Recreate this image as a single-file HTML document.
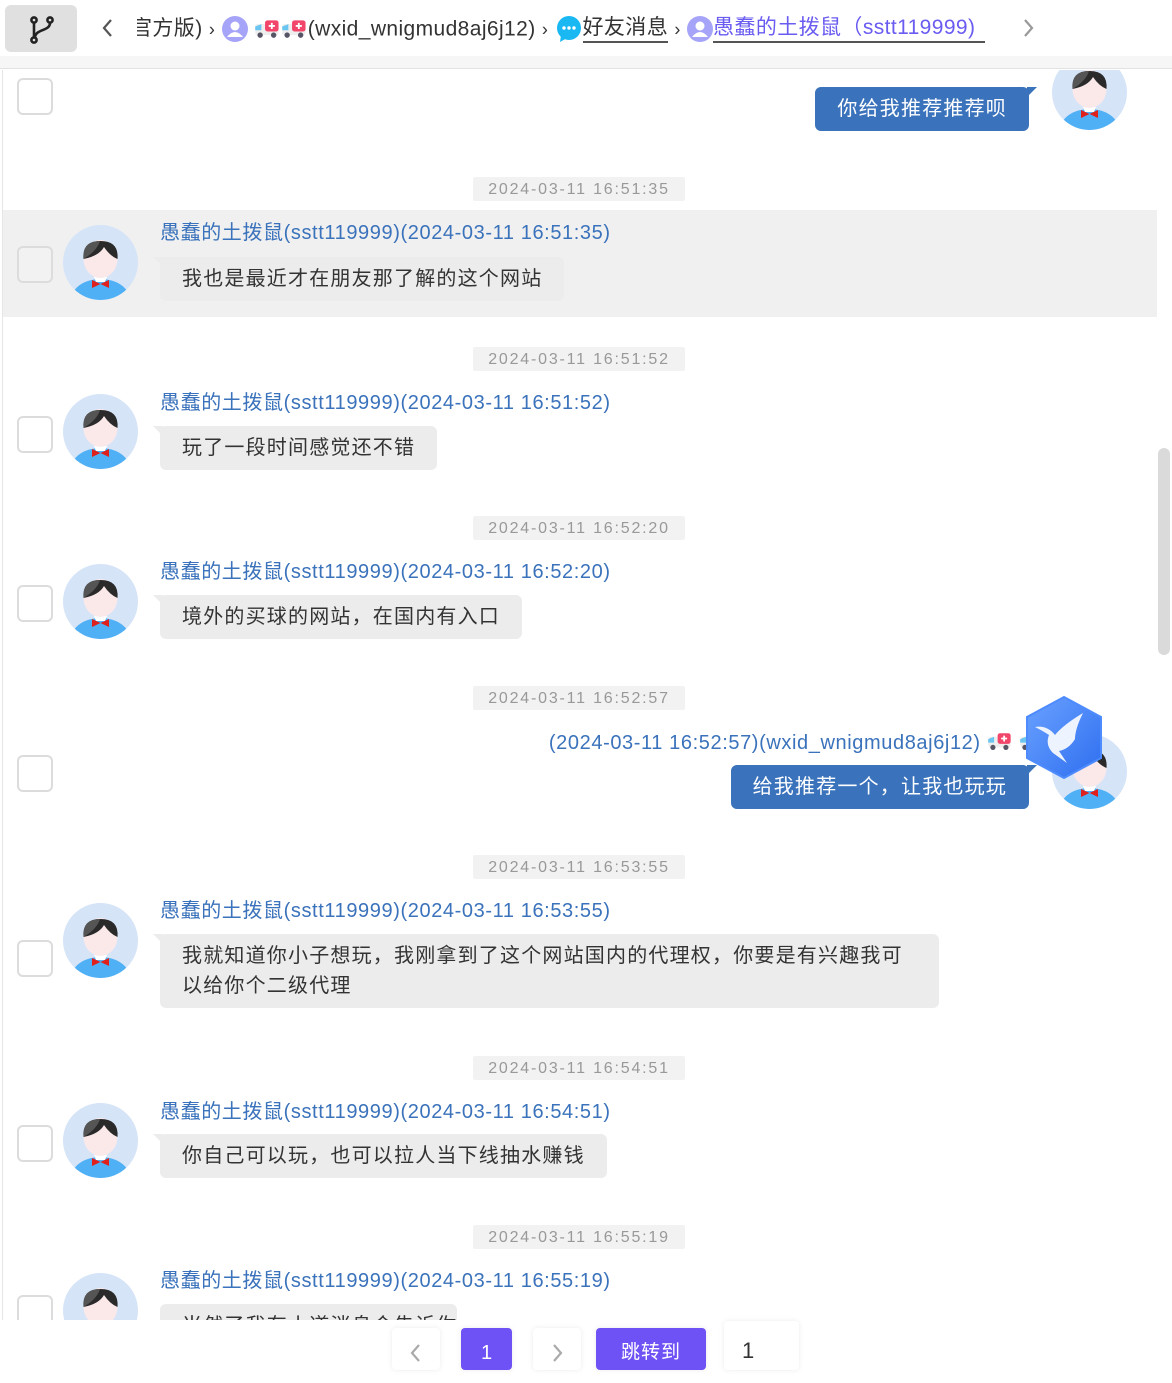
<!DOCTYPE html>
<html><head><meta charset="utf-8">
<style>
*{margin:0;padding:0;box-sizing:border-box}
body{width:1172px;height:1370px;overflow:hidden;background:#fff;font-family:"Liberation Sans","Noto Sans CJK SC",sans-serif;position:relative}
.abs{position:absolute}
.hdr{left:0;top:0;width:1172px;height:56px;background:#fff}
.strip{left:0;top:56px;width:1172px;height:13px;background:#f6f6f6;border-bottom:1px solid #e2e2e2}
.btn{left:5px;top:5px;width:72px;height:47px;background:#e0e0e0;border-radius:6px}
.crumb{left:137px;top:13px;width:870px;height:36px;overflow:hidden;white-space:nowrap;font-size:21px;color:#333;line-height:32px;letter-spacing:0.4px}
.crumb span,.crumb svg{vertical-align:middle}
.chat{left:2px;top:70px;width:1170px;height:1250px;overflow:hidden;border-left:1px solid #e6e6e6}
.ts{left:472px;width:212px;height:24px;background:#f2f2f2;color:#999;font-size:16px;line-height:25px;text-align:center;letter-spacing:1.8px;border-radius:2px;margin-top:0px}
.cb{left:16px;width:36px;height:37px;border:2px solid #dcdcdc;border-radius:6px;background:#fff}
.name{left:159px;font-size:20px;color:#3a72bb;line-height:26px;white-space:nowrap;letter-spacing:0.6px}
.bub{left:159px;background:#ececec;color:#333;font-size:20px;line-height:30px;padding:7px 22px;border-radius:6px;white-space:nowrap;letter-spacing:1.2px}
.bub:before{content:"";position:absolute;left:-7px;top:0;border-top:10px solid #ececec;border-left:10px solid transparent}
.rb{background:#3a72bb;color:#fff;font-size:20px;line-height:30px;padding:7px 22px;border-radius:6px;white-space:nowrap;letter-spacing:1.2px}
.rb:after{content:"";position:absolute;right:-8px;top:0;border-top:10px solid #3a72bb;border-right:10px solid transparent}
.av{width:75px;height:75px}
.pg{top:1328px;height:42px;background:#fff;border-radius:4px;box-shadow:0 0 6px rgba(0,0,0,.08);text-align:center;line-height:50px;font-size:20px}
</style></head><body>
<svg width="0" height="0" style="position:absolute">
<defs>
<clipPath id="cc"><circle cx="37.5" cy="37.5" r="37.5"/></clipPath>
<symbol id="avt" viewBox="0 0 75 75">
<circle cx="37.5" cy="37.5" r="37.5" fill="#d6e4f8"/>
<g clip-path="url(#cc)">
<ellipse cx="37.5" cy="74" rx="29" ry="20" fill="#4fb0f6"/>
<path d="M31 52 L44 52 L42 57 L33 57Z" fill="#fff"/>
<ellipse cx="37.5" cy="34" rx="17" ry="19" fill="#fbe9ea"/>
<path d="M20.5 34 Q19 16 37.5 16 Q56 16 54.5 34 Q47 31 41 22 Q36 31 20.5 34Z" fill="#2a2a2a"/>
<path d="M20.5 34 Q19 16 37 16 Q34 26 20.5 34Z" fill="#555"/>
<path d="M29 55 L37.5 59 L46 55 L46 63 L37.5 59 L29 63Z" fill="#e0201b"/>
</g></symbol>
<symbol id="amb" viewBox="0 0 22 16">
<rect x="1" y="4" width="19" height="9" rx="2" fill="#eeeeee"/>
<rect x="9" y="1" width="11" height="9" rx="2" fill="#f2456a"/>
<path d="M14.5 3v5M12 5.5h5" stroke="#fff" stroke-width="1.5"/>
<path d="M1 6 L6 4 L6 9 L1 9Z" fill="#6ac5f0"/>
<circle cx="5" cy="13" r="2.2" fill="#556"/><circle cx="16" cy="13" r="2.2" fill="#556"/>
</symbol>
</defs></svg>

<div class="abs hdr"></div>
<div class="abs strip"></div>
<div class="abs btn"><svg width="72" height="47" viewBox="0 0 72 47"><g fill="none" stroke="#222" stroke-width="2.6"><circle cx="29" cy="15" r="2.6"/><circle cx="29" cy="35" r="2.6"/><circle cx="45" cy="15" r="2.6"/><path d="M29 18v14M45 18c0 8-14 6-15 14"/></g></svg></div>
<svg class="abs" style="left:100px;top:17px" width="16" height="22" viewBox="0 0 16 22"><path d="M11 3 L4 11 L11 19" fill="none" stroke="#555" stroke-width="2.2"/></svg>
<div class="abs crumb"><span style="margin-left:-6px">官方版)</span> <span style="font-size:18px">›</span>
<svg width="26" height="26" viewBox="0 0 26 26"><circle cx="13" cy="13" r="13" fill="#a6a4f9"/><circle cx="13" cy="10" r="4.5" fill="#fff"/><path d="M5 21 Q13 11 21 21Z" fill="#fff"/></svg>
<svg width="27" height="20" viewBox="0 0 22 16"><use href="#amb"/></svg><svg width="27" height="20" viewBox="0 0 22 16"><use href="#amb"/></svg><span>(wxid_wnigmud8aj6j12)</span> <span style="font-size:18px">›</span>
<svg width="28" height="28" viewBox="0 0 28 28"><circle cx="14" cy="13" r="12" fill="#1ab8f3"/><path d="M6 20 L5 27 L12 23Z" fill="#1ab8f3"/><circle cx="9" cy="13" r="1.7" fill="#fff"/><circle cx="14" cy="13" r="1.7" fill="#fff"/><circle cx="19" cy="13" r="1.7" fill="#fff"/></svg><span style="border-bottom:2px solid #555;line-height:26px;display:inline-block">好友消息</span> <span style="font-size:18px">›</span>
<svg width="26" height="26" viewBox="0 0 26 26"><circle cx="13" cy="13" r="13" fill="#a6a4f9"/><circle cx="13" cy="10" r="4.5" fill="#fff"/><path d="M5 21 Q13 11 21 21Z" fill="#fff"/></svg><span style="color:#6a5cf0;border-bottom:2px solid #555;line-height:26px;display:inline-block;padding-right:10px">愚蠢的土拨鼠（sstt119999)</span>
</div>
<svg class="abs" style="left:1020px;top:17px" width="16" height="22" viewBox="0 0 16 22"><path d="M5 3 L12 11 L5 19" fill="none" stroke="#999" stroke-width="2.2"/></svg>

<div class="abs chat">
<div style="position:absolute;left:-2px;top:0;width:1170px;height:1250px">
<div class="abs cb" style="top:8px"></div>
<div class="abs rb" style="right:142px;top:17px">你给我推荐推荐呗</div>
<svg class="abs av" style="left:1051px;top:-15px"><use href="#avt"/></svg>

<div class="abs ts" style="top:107px">2024-03-11 16:51:35</div>
<div class="abs" style="left:2px;top:140px;width:1154px;height:107px;background:#f0f0f0"></div>
<div class="abs cb" style="top:176px;background:#f2f2f2"></div>
<svg class="abs av" style="left:62px;top:155px"><use href="#avt"/></svg>
<div class="abs name" style="top:150px">愚蠢的土拨鼠(sstt119999)(2024-03-11 16:51:35)</div>
<div class="abs bub" style="top:187px">我也是最近才在朋友那了解的这个网站</div>

<div class="abs ts" style="top:277px">2024-03-11 16:51:52</div>
<div class="abs cb" style="top:346px"></div>
<svg class="abs av" style="left:62px;top:324px"><use href="#avt"/></svg>
<div class="abs name" style="top:320px">愚蠢的土拨鼠(sstt119999)(2024-03-11 16:51:52)</div>
<div class="abs bub" style="top:356px">玩了一段时间感觉还不错</div>

<div class="abs ts" style="top:446px">2024-03-11 16:52:20</div>
<div class="abs cb" style="top:515px"></div>
<svg class="abs av" style="left:62px;top:494px"><use href="#avt"/></svg>
<div class="abs name" style="top:489px">愚蠢的土拨鼠(sstt119999)(2024-03-11 16:52:20)</div>
<div class="abs bub" style="top:525px">境外的买球的网站，在国内有入口</div>

<div class="abs ts" style="top:616px">2024-03-11 16:52:57</div>
<div class="abs cb" style="top:685px"></div>
<div class="abs name" style="left:auto;right:126px;top:660px">(2024-03-11 16:52:57)(wxid_wnigmud8aj6j12) <svg width="26" height="19" viewBox="0 0 22 16" style="vertical-align:-2px"><use href="#amb"/></svg> <svg width="26" height="19" viewBox="0 0 22 16" style="vertical-align:-2px"><use href="#amb"/></svg></div>
<div class="abs rb" style="right:142px;top:695px">给我推荐一个，让我也玩玩</div>
<svg class="abs av" style="left:1051px;top:664px"><use href="#avt"/></svg>
<svg class="abs" style="left:1022px;top:625px" width="82" height="85" viewBox="0 0 82 85"><defs><linearGradient id="hg" x1="0" y1="0" x2="1" y2="1"><stop offset="0" stop-color="#6aa2ff"/><stop offset="1" stop-color="#2e6ef0"/></linearGradient></defs><polygon points="41,2 78,22 78,63 41,83 4,63 4,22" fill="url(#hg)" stroke="#4d8bff" stroke-width="2"/><path d="M12 32 Q24 30 32 40 Q40 30 60 18 Q52 34 52 44 Q46 54 36 56 L44 68 L30 58 Q22 50 26 40 Q20 36 12 32Z" fill="#eef4ff"/></svg>

<div class="abs ts" style="top:785px">2024-03-11 16:53:55</div>
<div class="abs cb" style="top:870px"></div>
<svg class="abs av" style="left:62px;top:833px"><use href="#avt"/></svg>
<div class="abs name" style="top:828px">愚蠢的土拨鼠(sstt119999)(2024-03-11 16:53:55)</div>
<div class="abs bub" style="top:864px;width:779px;white-space:normal">我就知道你小子想玩，我刚拿到了这个网站国内的代理权，你要是有兴趣我可以给你个二级代理</div>

<div class="abs ts" style="top:986px">2024-03-11 16:54:51</div>
<div class="abs cb" style="top:1055px"></div>
<svg class="abs av" style="left:62px;top:1033px"><use href="#avt"/></svg>
<div class="abs name" style="top:1029px">愚蠢的土拨鼠(sstt119999)(2024-03-11 16:54:51)</div>
<div class="abs bub" style="top:1064px">你自己可以玩，也可以拉人当下线抽水赚钱</div>

<div class="abs ts" style="top:1155px">2024-03-11 16:55:19</div>
<div class="abs cb" style="top:1225px"></div>
<svg class="abs av" style="left:62px;top:1203px"><use href="#avt"/></svg>
<div class="abs name" style="top:1198px">愚蠢的土拨鼠(sstt119999)(2024-03-11 16:55:19)</div>
<div class="abs bub" style="top:1234px;width:297px;overflow:hidden">当然了我有小道消息会告诉你</div>
</div>
</div>
<div class="abs" style="left:1158px;top:448px;width:12px;height:207px;background:#dadada;border-radius:6px"></div>

<div class="abs pg" style="left:392px;width:48px"><svg width="16" height="22" viewBox="0 0 16 22" style="margin-top:14px"><path d="M11 3 L4 11 L11 19" fill="none" stroke="#aaa" stroke-width="2.2"/></svg></div>
<div class="abs pg" style="left:461px;width:51px;background:#6f52f5;color:#fff">1</div>
<div class="abs pg" style="left:533px;width:48px"><svg width="16" height="22" viewBox="0 0 16 22" style="margin-top:14px"><path d="M5 3 L12 11 L5 19" fill="none" stroke="#aaa" stroke-width="2.2"/></svg></div>
<div class="abs pg" style="left:596px;width:110px;background:#6f52f5;color:#fff;font-size:19px;letter-spacing:1px">跳转到</div>
<div class="abs pg" style="left:724px;top:1321px;width:75px;height:49px;text-align:left;padding-left:18px;line-height:60px;font-size:22px;color:#333">1</div>
</body></html>
